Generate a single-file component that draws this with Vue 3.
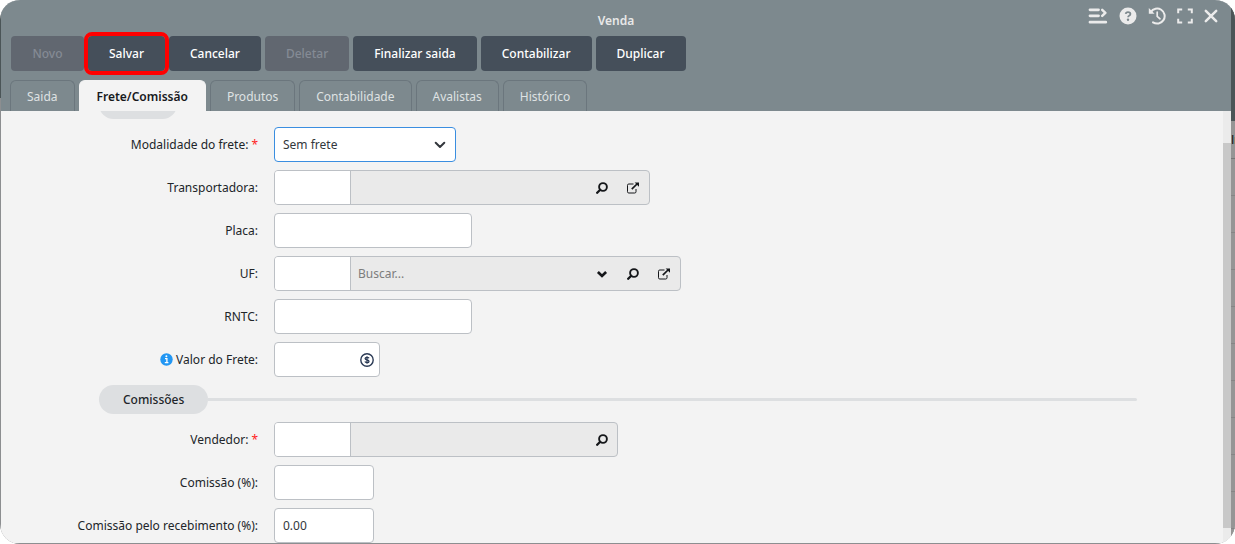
<script setup>
import { ref } from 'vue'

const actions = [
  { label: 'Novo', disabled: true },
  { label: 'Salvar', highlight: true },
  { label: 'Cancelar' },
  { label: 'Deletar', disabled: true },
  { label: 'Finalizar saida' },
  { label: 'Contabilizar' },
  { label: 'Duplicar' },
]
const tabs = ['Saida', 'Frete/Comissão', 'Produtos', 'Contabilidade', 'Avalistas', 'Histórico']
const active = ref('Frete/Comissão')
const modalidade = ref('Sem frete')
const recebimento = ref('0.00')
</script>

<template>
  <div class="page">
    <svg class="defs" width="0" height="0" aria-hidden="true">
      <symbol id="i-search" viewBox="0 0 12 12">
        <circle cx="7" cy="5" r="3.9" fill="none" stroke="currentColor" stroke-width="1.9" />
        <path d="M4.2 7.8 1.2 10.8" stroke="currentColor" stroke-width="2.3" stroke-linecap="round" />
      </symbol>
      <symbol id="i-open" viewBox="0 0 14 12">
        <path d="M7.5 2H2.8Q1.5 2 1.5 3.3V9.7Q1.5 11 2.8 11H8.7Q10 11 10 9.7V7" fill="none" stroke="currentColor" stroke-width="1" />
        <path d="M5.8 7.2 11 2" stroke="currentColor" stroke-width="1.7" />
        <path d="M8.6.4H13V4.8Z" fill="currentColor" />
      </symbol>
      <symbol id="i-chevron" viewBox="0 0 12 8">
        <path d="M1.7 1.8 6 6 10.3 1.8" fill="none" stroke="currentColor" stroke-width="2" stroke-linecap="round" stroke-linejoin="round" />
      </symbol>
      <symbol id="i-chevron-bold" viewBox="0 0 12 8">
        <path d="M1.9 2 6 5.9 10.1 2" fill="none" stroke="currentColor" stroke-width="2.7" />
      </symbol>
    </svg>

    <main class="modal">
      <header class="head">
        <h1 class="title">Venda</h1>
        <div class="tools">
          <button type="button" aria-label="Menu">
            <svg width="20" height="16" viewBox="0 0 20 16" fill="none" stroke="currentColor" stroke-width="2.8" stroke-linecap="round">
              <path d="M2 1.8H10.5M2 7.8H10.5M2 14.2H17.8" />
              <path d="M14.2 1.8 17.4 4.8 14.2 7.8" stroke-width="2.5" stroke-linejoin="round" />
            </svg>
          </button>
          <button type="button" aria-label="Ajuda">
            <svg width="18" height="18" viewBox="0 0 18 18">
              <circle cx="9" cy="9" r="8.5" fill="currentColor" />
              <path d="M6.7 6.9Q6.9 5.1 9 5.1 11.4 5.1 11.4 7 11.4 8.2 10.1 8.8 9.1 9.3 9.1 10.2" fill="none" stroke="#7d898e" stroke-width="1.8" />
              <circle cx="9" cy="12.7" r="1.2" fill="#7d898e" />
            </svg>
          </button>
          <button type="button" aria-label="Restaurar histórico">
            <svg width="18" height="18" viewBox="0 0 18 18" fill="none" stroke="currentColor" stroke-width="2">
              <path d="M2.8 5.1A7.5 7.5 0 1 1 5 15.3" stroke-linecap="round" />
              <path d="M.8 1V6.8H6.6Z" fill="currentColor" stroke="none" />
              <path d="M9.2 5.2V9.3L12 11.8" stroke-width="1.7" stroke-linecap="round" />
            </svg>
          </button>
          <button type="button" aria-label="Tela cheia">
            <svg width="16" height="16" viewBox="0 0 16 16" fill="none" stroke="currentColor" stroke-width="2">
              <path d="M1.2 5.2V1.5H5.2M10.8 1.5H14.8V5.2M14.8 10.8V14.5H10.8M5.2 14.5H1.2V10.8" />
            </svg>
          </button>
          <button type="button" aria-label="Fechar">
            <svg width="14" height="14" viewBox="0 0 14 14" stroke="currentColor" stroke-width="2.5" stroke-linecap="round">
              <path d="M1.8 1.8 12.2 12.2M12.2 1.8 1.8 12.2" />
            </svg>
          </button>
        </div>
        <div class="actions">
          <button v-for="a in actions" :key="a.label" type="button" :disabled="a.disabled" :class="{ highlight: a.highlight }">{{ a.label }}</button>
        </div>
        <nav class="tabs" role="tablist">
          <button v-for="t in tabs" :key="t" type="button" role="tab" :aria-selected="active === t" :class="{ active: active === t }" @click="active = t">{{ t }}</button>
        </nav>
      </header>

      <div class="body">
        <form class="form" @submit.prevent>
          <div class="section first"><span class="pill"></span></div>
          <div class="row">
            <label for="modalidade">Modalidade do frete: <b>*</b></label>
            <div class="select">
              <select id="modalidade" v-model="modalidade"><option>Sem frete</option></select>
              <svg width="12" height="8"><use href="#i-chevron" /></svg>
            </div>
          </div>
          <div class="row">
            <label for="transportadora">Transportadora:</label>
            <div class="lookup medium">
              <input id="transportadora" type="text" />
              <span class="fill"></span>
              <button type="button" aria-label="Pesquisar transportadora"><svg width="12" height="12"><use href="#i-search" /></svg></button>
              <button type="button" aria-label="Abrir transportadora"><svg width="14" height="12"><use href="#i-open" /></svg></button>
            </div>
          </div>
          <div class="row">
            <label for="placa">Placa:</label>
            <input id="placa" class="field wide" type="text" />
          </div>
          <div class="row">
            <label for="uf">UF:</label>
            <div class="lookup large">
              <input id="uf" type="text" />
              <input class="fill" type="text" placeholder="Buscar..." aria-label="Buscar UF" />
              <button type="button" aria-label="Listar UF"><svg width="12" height="8"><use href="#i-chevron-bold" /></svg></button>
              <button type="button" aria-label="Pesquisar UF"><svg width="12" height="12"><use href="#i-search" /></svg></button>
              <button type="button" aria-label="Abrir UF"><svg width="14" height="12"><use href="#i-open" /></svg></button>
            </div>
          </div>
          <div class="row">
            <label for="rntc">RNTC:</label>
            <input id="rntc" class="field wide" type="text" />
          </div>
          <div class="row">
            <label for="valor">
              <svg width="13" height="13" viewBox="0 0 13 13">
                <circle cx="6.5" cy="6.5" r="6.2" fill="#2196f3" />
                <path d="M5 5.7H6.9V9.4M4.8 9.6H8.4" fill="none" stroke="#fff" stroke-width="1.3" />
                <circle cx="6.4" cy="3.3" r="1" fill="#fff" />
              </svg>
              Valor do Frete:
            </label>
            <div class="money">
              <input id="valor" type="text" />
              <button type="button" aria-label="Calcular valor">
                <svg width="14" height="14" viewBox="0 0 14 14" fill="none" stroke="#2b3a55">
                  <circle cx="7" cy="7" r="6.2" stroke-width="1.4" />
                  <path d="M9 5.3Q8.6 4.4 7 4.4 5.1 4.4 5.1 5.6 5.1 6.7 7 7 9 7.3 9 8.4 9 9.6 7 9.6 5.3 9.6 4.9 8.6M7 3.2V10.8" stroke-width="1.3" />
                </svg>
              </button>
            </div>
          </div>
          <div class="section"><h2 class="pill">Comissões</h2><span class="line"></span></div>
          <div class="row">
            <label for="vendedor">Vendedor: <b>*</b></label>
            <div class="lookup small">
              <input id="vendedor" type="text" />
              <span class="fill"></span>
              <button type="button" aria-label="Pesquisar vendedor"><svg width="12" height="12"><use href="#i-search" /></svg></button>
            </div>
          </div>
          <div class="row">
            <label for="comissao">Comissão (%):</label>
            <input id="comissao" class="field" type="text" />
          </div>
          <div class="row">
            <label for="recebimento">Comissão pelo recebimento (%):</label>
            <input id="recebimento" v-model="recebimento" class="field" type="text" />
          </div>
        </form>
        <div class="scroll"><span class="thumb"></span></div>
      </div>
    </main>

    <aside class="behind">
      <div class="behind-head"></div>
      <div class="behind-cell">Ir</div>
      <div v-for="n in 10" :key="n" class="behind-row"></div>
    </aside>
  </div>
</template>

<style>
body {
  background: #fff;
}
</style>

<style scoped>
* {
  box-sizing: border-box;
}
.page {
  display: flex;
  height: 100vh;
  padding: 0 0 1px 1px;
  border-radius: 20px;
  overflow: hidden;
  background: linear-gradient(#4b5557 98px, #8c8e90 98px);
  font-family: "Noto Sans", "Open Sans", sans-serif;
  font-size: 12px;
  color: #212529;
}
.defs {
  position: absolute;
}
button,
input,
select {
  font: inherit;
  color: inherit;
}
button {
  padding: 0;
  border: 0;
  background: none;
}
svg {
  display: block;
}
.modal {
  flex: 1;
  min-width: 0;
  display: flex;
  flex-direction: column;
  background: #f3f3f3;
  overflow: hidden;
}
.head {
  position: relative;
  flex: none;
  background: #7d898e;
  padding: 13px 10px 0;
}
.title {
  margin: 0 0 7px;
  font-size: 12px;
  line-height: 16px;
  font-weight: 600;
  text-align: center;
  color: #e8e8e8;
}
.tools {
  position: absolute;
  top: 6px;
  right: 13px;
  height: 20px;
  display: flex;
  align-items: center;
  gap: 11px;
  color: #ebebeb;
}
.actions {
  display: flex;
  gap: 4px;
}
.actions button {
  min-width: 73px;
  height: 35px;
  padding: 0 21px;
  border-radius: 4px;
  background: #454f5a;
  color: #fff;
  font-weight: 500;
}
.actions button:disabled {
  background: #616770;
  color: #858b95;
}
.actions .highlight {
  outline: 4px solid #f00;
  z-index: 1;
}
.tabs {
  display: flex;
  gap: 4px;
  margin: 9px 0 0 -1px;
}
.tabs button {
  height: 31px;
  padding: 0 16px;
  border: 1px solid #6b767d;
  border-bottom: 0;
  border-radius: 6px 6px 0 0;
  color: #dfe2e3;
}
.tabs .active {
  padding: 0 17px;
  background: #f3f3f3;
  border-color: #f3f3f3;
  color: #17191c;
  font-weight: 600;
}
.body {
  flex: 1;
  min-height: 0;
  display: flex;
  overflow: hidden;
}
.form {
  flex: 1;
  display: flex;
  flex-direction: column;
  gap: 8px;
  margin-top: -21px;
}
.section {
  flex: none;
  display: flex;
  align-items: center;
  margin: 0 86px 0 98px;
}
.pill {
  display: flex;
  align-items: center;
  height: 29px;
  margin: 0;
  padding: 0 24px;
  border-radius: 15px;
  background: #dddfe1;
  font-size: 12px;
  font-weight: 500;
}
.first .pill {
  width: 78px;
}
.line {
  flex: 1;
  height: 3px;
  border-radius: 0 2px 2px 0;
  background: #dddfe1;
}
.row {
  flex: none;
  display: grid;
  grid-template-columns: 257px auto;
  justify-content: start;
  align-items: center;
  column-gap: 16px;
  height: 35px;
}
label {
  display: flex;
  align-items: center;
  justify-content: flex-end;
  gap: 3px;
  white-space: nowrap;
}
label b {
  color: #f22;
  font-weight: 400;
}
.field,
.lookup,
.money,
.select {
  height: 35px;
  border: 1px solid #bcc0c5;
  border-radius: 4px;
  background: #fff;
  color: #33373c;
}
.field {
  width: 100px;
  padding: 0 8px;
}
.wide {
  width: 198px;
}
.lookup {
  display: flex;
  overflow: hidden;
  background: #eaeaea;
}
.small {
  width: 344px;
}
.medium {
  width: 376px;
  padding-right: 1px;
}
.large {
  width: 407px;
  padding-right: 1px;
}
.lookup input {
  width: 75px;
  padding: 0 8px;
  border: 0;
  background: #fff;
}
.lookup .fill {
  flex: 1;
  min-width: 0;
  border-left: 1px solid #bcc0c5;
  padding: 0 7px;
  background: none;
}
.fill::placeholder {
  color: #7d7d7d;
  opacity: 1;
}
.lookup button {
  display: flex;
  align-items: center;
  justify-content: center;
  width: 31px;
  color: #15171a;
}
.money {
  display: flex;
  align-items: center;
  width: 106px;
  padding-right: 5px;
}
.money input {
  flex: 1;
  min-width: 0;
  height: 100%;
  padding: 0 8px;
  border: 0;
  background: none;
}
.select {
  display: grid;
  align-items: center;
  width: 182px;
  border-color: #3a8ee0;
}
.select select,
.select svg {
  grid-area: 1 / 1;
}
.select select {
  width: 100%;
  height: 33px;
  padding: 0 8px;
  border: 0;
  background: none;
  appearance: none;
}
.select svg {
  justify-self: end;
  margin-right: 9px;
  pointer-events: none;
}
.scroll {
  width: 8px;
  padding: 32px 0 15px;
  background: #ebebeb;
}
.thumb {
  display: block;
  height: 100%;
  background: #c8c8c8;
}
.behind {
  flex: none;
  width: 4px;
  overflow: hidden;
  background: #959595;
}
.behind-head {
  height: 121px;
  background: #4b5557;
}
.behind-cell {
  height: 38px;
  line-height: 38px;
  font-family: "Liberation Sans", sans-serif;
  color: #111;
  border-bottom: 1px solid #777;
}
.behind-row {
  height: 37px;
  border-bottom: 1px solid #858585;
}
</style>
